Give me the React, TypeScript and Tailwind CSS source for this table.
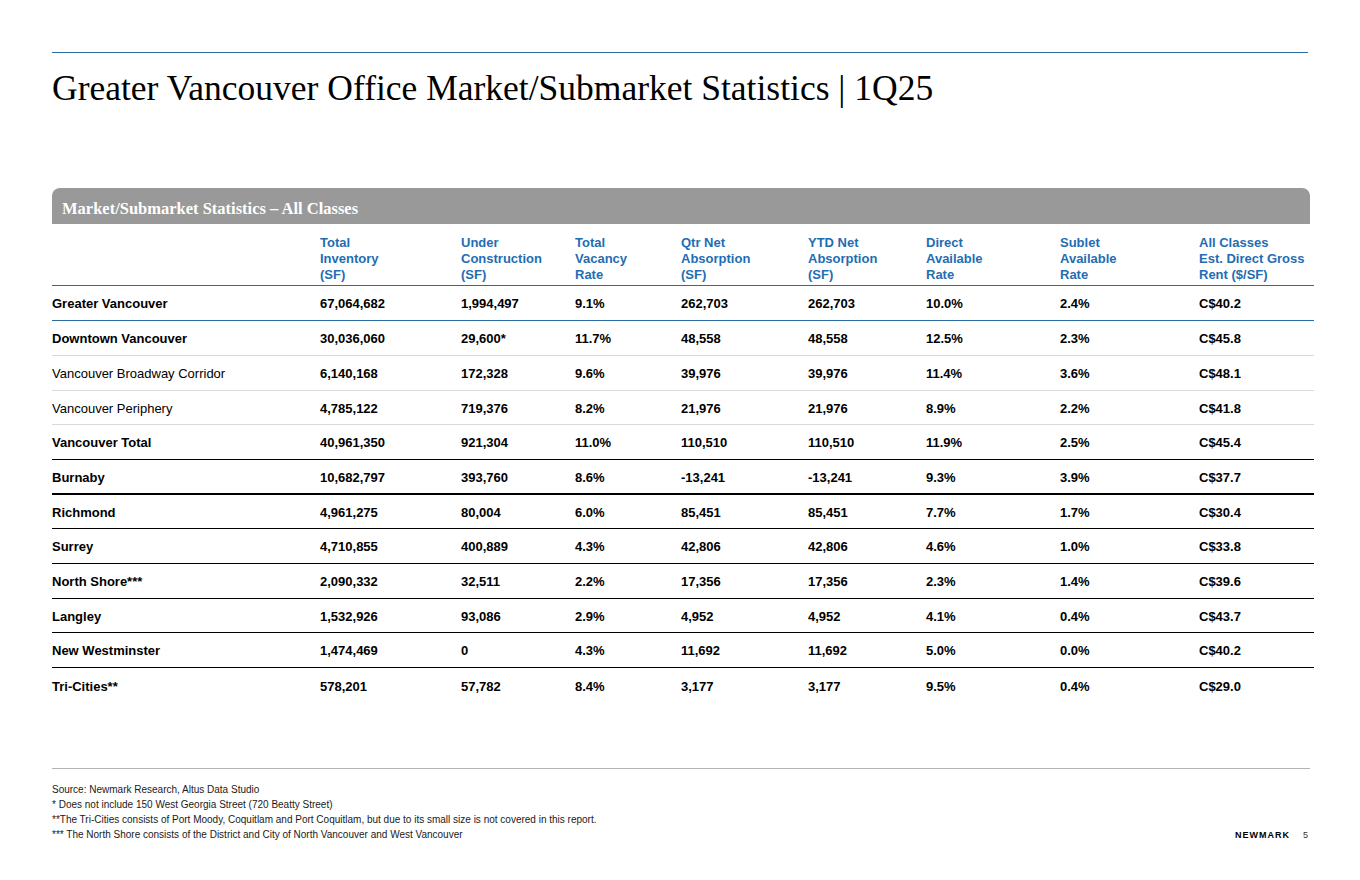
const headers = [
  ["Total", "Inventory", "(SF)"],
  ["Under", "Construction", "(SF)"],
  ["Total", "Vacancy", "Rate"],
  ["Qtr Net", "Absorption", "(SF)"],
  ["YTD Net", "Absorption", "(SF)"],
  ["Direct", "Available", "Rate"],
  ["Sublet", "Available", "Rate"],
  ["All Classes", "Est. Direct Gross", "Rent ($/SF)"],
];

type Row = {
  name: string;
  bold: boolean;
  values: string[];
  line: string;
};

const rows: Row[] = [
  { name: "Greater Vancouver", bold: true, line: "h-[35px] border-b border-[#2b6ca3]", values: ["67,064,682", "1,994,497", "9.1%", "262,703", "262,703", "10.0%", "2.4%", "C$40.2"] },
  { name: "Downtown Vancouver", bold: true, line: "h-[35px] border-b border-[#d9d9d9]", values: ["30,036,060", "29,600*", "11.7%", "48,558", "48,558", "12.5%", "2.3%", "C$45.8"] },
  { name: "Vancouver Broadway Corridor", bold: false, line: "h-[35px] border-b border-[#d9d9d9]", values: ["6,140,168", "172,328", "9.6%", "39,976", "39,976", "11.4%", "3.6%", "C$48.1"] },
  { name: "Vancouver Periphery", bold: false, line: "h-[34px] border-b border-[#d9d9d9]", values: ["4,785,122", "719,376", "8.2%", "21,976", "21,976", "8.9%", "2.2%", "C$41.8"] },
  { name: "Vancouver Total", bold: true, line: "h-[35px] border-b border-black", values: ["40,961,350", "921,304", "11.0%", "110,510", "110,510", "11.9%", "2.5%", "C$45.4"] },
  { name: "Burnaby", bold: true, line: "h-[35px] border-b-2 border-black", values: ["10,682,797", "393,760", "8.6%", "-13,241", "-13,241", "9.3%", "3.9%", "C$37.7"] },
  { name: "Richmond", bold: true, line: "h-[34px] border-b border-black", values: ["4,961,275", "80,004", "6.0%", "85,451", "85,451", "7.7%", "1.7%", "C$30.4"] },
  { name: "Surrey", bold: true, line: "h-[35px] border-b border-black", values: ["4,710,855", "400,889", "4.3%", "42,806", "42,806", "4.6%", "1.0%", "C$33.8"] },
  { name: "North Shore***", bold: true, line: "h-[35px] border-b border-black", values: ["2,090,332", "32,511", "2.2%", "17,356", "17,356", "2.3%", "1.4%", "C$39.6"] },
  { name: "Langley", bold: true, line: "h-[34px] border-b border-black", values: ["1,532,926", "93,086", "2.9%", "4,952", "4,952", "4.1%", "0.4%", "C$43.7"] },
  { name: "New Westminster", bold: true, line: "h-[35px] border-b border-black", values: ["1,474,469", "0", "4.3%", "11,692", "11,692", "5.0%", "0.0%", "C$40.2"] },
  { name: "Tri-Cities**", bold: true, line: "h-[35px]", values: ["578,201", "57,782", "8.4%", "3,177", "3,177", "9.5%", "0.4%", "C$29.0"] },
];

const cols =
  "grid grid-cols-[268px_141px_114px_106px_127px_118px_134px_139px_115px]";

const notes = [
  "Source: Newmark Research, Altus Data Studio",
  "* Does not include 150 West Georgia Street (720 Beatty Street)",
  "**The Tri-Cities consists of Port Moody, Coquitlam and Port Coquitlam, but due to its small size is not covered in this report.",
  "*** The North Shore consists of the District and City of North Vancouver and West Vancouver",
];

export default function App() {
  return (
    <div className="h-[880px] w-[1360px] bg-white px-[52px] pt-[52px] font-['Liberation_Sans',Arial,sans-serif] text-black">
      {/* Top rule + title */}
      <div className="h-px w-[1256px] bg-[#2b6ca3]" />
      <h1 className="mt-[12px] font-['Liberation_Serif','Times_New_Roman',serif] text-[35.5px] leading-[46px] font-normal">
        Greater Vancouver Office Market/Submarket Statistics | 1Q25
      </h1>

      {/* Table */}
      <div className="mt-[77px] w-[1262px]">
        <div className="flex h-[36px] w-[1258px] items-center rounded-t-[8px] bg-[#999999] px-[10px] pt-[6px] font-['Liberation_Serif','Times_New_Roman',serif] text-[16.5px] font-bold text-white">
          Market/Submarket Statistics – All Classes
        </div>

        <div className={`${cols} border-b border-[#2b6ca3] pt-[11px] pb-[2px] text-[13px] leading-[16px] font-bold text-[#1f6db3]`}>
          <div />
          {headers.map((h, i) => (
            <div key={i}>
              {h.map((line) => (
                <div key={line}>{line}</div>
              ))}
            </div>
          ))}
        </div>

        {rows.map((r) => (
          <div key={r.name} className={`${cols} items-center pt-[2px] text-[13px] ${r.line}`}>
            <div className={r.bold ? "font-bold" : "font-normal"}>{r.name}</div>
            {r.values.map((v, i) => (
              <div key={i} className="font-bold">
                {v}
              </div>
            ))}
          </div>
        ))}
      </div>

      {/* Footnotes */}
      <div className="mt-[65px] h-px w-[1258px] bg-[#b3b3b3]" />
      <div className="mt-[13px] flex w-[1258px] items-end justify-between">
        <div className="text-[10px] leading-[15px] text-[#1a1a1a]">
          {notes.map((n) => (
            <p key={n}>{n}</p>
          ))}
        </div>
        <div className="flex items-center gap-[13px] pr-[2px] text-[9px]">
          <span className="font-bold tracking-[1px]">NEWMARK</span>
          <span className="text-[#333]">5</span>
        </div>
      </div>
    </div>
  );
}
